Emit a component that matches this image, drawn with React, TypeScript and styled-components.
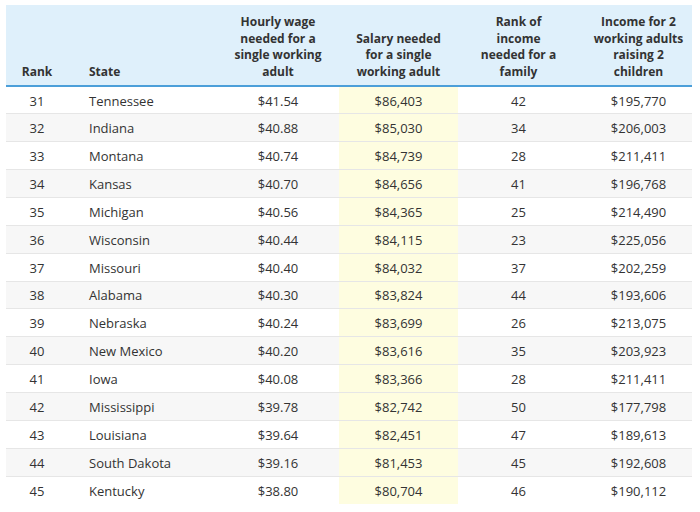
import * as React from "react";
import styled, { createGlobalStyle } from "styled-components";

const GlobalStyle = createGlobalStyle`
  body {
    margin: 0;
    background: #ffffff;
    font-family: "Open Sans", "Liberation Sans", sans-serif;
    color: #333333;
  }
`;

const Wrap = styled.div`
  padding: 5px 8px 0 6px;
`;

const Table = styled.table`
  width: 686px;
  border-collapse: collapse;
  table-layout: fixed;
  font-size: 13px;
`;

const HeadRow = styled.tr`
  background: #dff0fb;
  border-bottom: 2px solid #4c9fd9;
`;

const Th = styled.th<{ $align?: string; $w: number; $pl?: number; $pr?: number }>`
  width: ${(p) => p.$w}px;
  height: 81px;
  padding: 0 ${(p) => p.$pr ?? 8}px 4px ${(p) => p.$pl ?? 8}px;
  box-sizing: border-box;
  vertical-align: bottom;
  text-align: ${(p) => p.$align ?? "center"};
  font-size: 12px;
  font-weight: 700;
  line-height: 16.8px;
  color: #333333;
`;

const Row = styled.tr<{ $odd: boolean }>`
  height: 27.86px;
  background: ${(p) => (p.$odd ? "#f7f7f7" : "#ffffff")};
  border-bottom: 1px solid #e6e6e6;
  &:last-child {
    border-bottom: none;
  }
`;

const Td = styled.td<{ $align?: string; $pl?: number; $hl?: boolean }>`
  padding: 1px 4px 0 ${(p) => p.$pl ?? 4}px;
  text-align: ${(p) => p.$align ?? "center"};
  background: ${(p) => (p.$hl ? "#fefde0" : "transparent")};
  line-height: 18px;
  color: #333333;
`;

const rows: [number, string, string, string, number, string][] = [
  [31, "Tennessee", "$41.54", "$86,403", 42, "$195,770"],
  [32, "Indiana", "$40.88", "$85,030", 34, "$206,003"],
  [33, "Montana", "$40.74", "$84,739", 28, "$211,411"],
  [34, "Kansas", "$40.70", "$84,656", 41, "$196,768"],
  [35, "Michigan", "$40.56", "$84,365", 25, "$214,490"],
  [36, "Wisconsin", "$40.44", "$84,115", 23, "$225,056"],
  [37, "Missouri", "$40.40", "$84,032", 37, "$202,259"],
  [38, "Alabama", "$40.30", "$83,824", 44, "$193,606"],
  [39, "Nebraska", "$40.24", "$83,699", 26, "$213,075"],
  [40, "New Mexico", "$40.20", "$83,616", 35, "$203,923"],
  [41, "Iowa", "$40.08", "$83,366", 28, "$211,411"],
  [42, "Mississippi", "$39.78", "$82,742", 50, "$177,798"],
  [43, "Louisiana", "$39.64", "$82,451", 47, "$189,613"],
  [44, "South Dakota", "$39.16", "$81,453", 45, "$192,608"],
  [45, "Kentucky", "$38.80", "$80,704", 46, "$190,112"],
];

const App = () => {
  return (
    <>
      <GlobalStyle />
      <Wrap>
        <Table>
          <thead>
            <HeadRow>
              <Th $w={62} $pl={4} $pr={4}>
                Rank
              </Th>
              <Th $w={149} $align="left" $pl={21}>
                State
              </Th>
              <Th $w={122}>Hourly wage needed for a single working adult</Th>
              <Th $w={119}>Salary needed for a single working adult</Th>
              <Th $w={121} $pl={15} $pr={15}>
                Rank of income needed for a family
              </Th>
              <Th $w={113} $pl={10} $pr={4}>
                Income for 2 working adults raising 2 children
              </Th>
            </HeadRow>
          </thead>
          <tbody>
            {rows.map((r, i) => (
              <Row key={r[0]} $odd={i % 2 === 1}>
                <Td>{r[0]}</Td>
                <Td $align="left" $pl={21}>
                  {r[1]}
                </Td>
                <Td>{r[2]}</Td>
                <Td $hl>{r[3]}</Td>
                <Td>{r[4]}</Td>
                <Td $pl={10}>{r[5]}</Td>
              </Row>
            ))}
          </tbody>
        </Table>
      </Wrap>
    </>
  );
};

export default App;
